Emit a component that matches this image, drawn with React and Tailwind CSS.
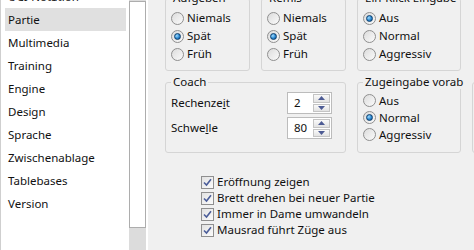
import React from 'react';

const pages = [
  'UCI-Notation',
  'Partie',
  'Multimedia',
  'Training',
  'Engine',
  'Design',
  'Sprache',
  'Zwischenablage',
  'Tablebases',
  'Version',
];

function Radio({ checked, label }) {
  return (
    <div className="flex items-center h-full">
      <div className="w-[13px] h-[13px] rounded-full border border-[#8f8f8f] bg-linear-to-br from-[#dcdcdc] to-[#fbfbfb] flex items-center justify-center">
        {checked && (
          <div className="w-[7px] h-[7px] rounded-full border border-[#0d3f6e] bg-[radial-gradient(circle_at_35%_35%,#9fdcff,#2a86cf_55%,#0b4b85)]" />
        )}
      </div>
      <span className="ml-[3px]">{label}</span>
    </div>
  );
}

function Check({ label }) {
  return (
    <div className="flex items-center h-[16px]">
      <div className="w-[13px] h-[13px] border border-[#8f8f8f] bg-linear-to-br from-[#e2e2e2] to-[#fbfbfb] flex items-center justify-center shrink-0">
        <svg width="9" height="9" viewBox="0 0 9 9">
          <path d="M1 4.5 L3.5 7 L8 1.2" fill="none" stroke="#4b5d99" strokeWidth="1.6" />
        </svg>
      </div>
      <span className="ml-[3px] whitespace-nowrap">{label}</span>
    </div>
  );
}

function Group({ title, className, children }) {
  return (
    <div className={'relative border border-[#d5d5d5] rounded-[3px] shrink-0 ' + className}>
      <span className="absolute top-[-8px] left-[5px] px-[2px] leading-[14px] bg-[#f0f0f0] whitespace-nowrap">
        {title}
      </span>
      {children}
    </div>
  );
}

function Spin({ value }) {
  return (
    <div className="flex w-[45px] h-[22px] border border-[#bcbcbc] bg-white">
      <div className="flex-1 flex items-center pl-[6px]">{value}</div>
      <div className="flex flex-col w-[19px] p-px gap-px">
        {['up', 'down'].map((d) => (
          <div
            key={d}
            className="flex-1 border border-[#c4c4c4] bg-linear-to-b from-[#fafafa] to-[#e2e2e2] flex items-center justify-center"
          >
            <svg width="7" height="4" viewBox="0 0 7 4">
              <path d={d === 'up' ? 'M0 4 L3.5 0 L7 4 Z' : 'M0 0 L7 0 L3.5 4 Z'} fill="#4d5b94" />
            </svg>
          </div>
        ))}
      </div>
    </div>
  );
}

export default function App() {
  return (
    <div
      className="flex w-[474px] h-[250px] overflow-hidden bg-[#f0f0f0] text-[#111] text-[11.5px] leading-[14px]"
      style={{ fontFamily: '"Segoe UI", "Noto Sans", sans-serif' }}
    >
      {/* page list */}
      <div className="w-[129px] h-full bg-white border-l border-[#cfcfcf] overflow-hidden shrink-0">
        <div className="-mt-[15px] pl-[4px]">
          {pages.map((p) => (
            <div
              key={p}
              className={
                'w-[121px] h-[23px] flex items-center pl-[3px] ' + (p === 'Partie' ? 'bg-[#e0e0e0]' : '')
              }
            >
              {p}
            </div>
          ))}
        </div>
      </div>

      {/* scrollbar */}
      <div className="w-[17px] h-full bg-[#dcdcdc] flex flex-col shrink-0 pt-px">
        <div className="h-[227px] border border-[#adadad] bg-white" />
      </div>
      <div className="w-[2px] h-full bg-white shrink-0" />

      {/* settings panel */}
      <div className="flex-1 h-full pl-[17px] overflow-hidden">
        <div className="flex gap-[11px] -mt-[2px]">
          <Group title="Aufgeben" className="w-[85px] h-[73px]">
            <div className="pt-[10px] pl-[5px]">
              <div className="h-[18px]"><Radio label="Niemals" /></div>
              <div className="h-[18px]"><Radio label="Spät" checked /></div>
              <div className="h-[18px]"><Radio label="Früh" /></div>
            </div>
          </Group>
          <Group title="Remis" className="w-[85px] h-[73px]">
            <div className="pt-[10px] pl-[5px]">
              <div className="h-[18px]"><Radio label="Niemals" /></div>
              <div className="h-[18px]"><Radio label="Spät" checked /></div>
              <div className="h-[18px]"><Radio label="Früh" /></div>
            </div>
          </Group>
          <Group title="Ein-Klick Eingabe" className="w-[104px] h-[73px]">
            <div className="pt-[10px] pl-[5px]">
              <div className="h-[18px]"><Radio label="Aus" checked /></div>
              <div className="h-[18px]"><Radio label="Normal" /></div>
              <div className="h-[18px]"><Radio label="Aggressiv" /></div>
            </div>
          </Group>
        </div>

        <div className="flex gap-[11px] mt-[11px]">
          <Group title="Coach" className="w-[181px] h-[71px]">
            <div className="pt-[9px] pl-[5px] flex flex-col gap-[3px]">
              <div className="flex items-center h-[22px]">
                <span className="w-[116px]">
                  Rechenze<span className="underline">i</span>t
                </span>
                <Spin value="2" />
              </div>
              <div className="flex items-center h-[22px]">
                <span className="w-[116px]">
                  Schwe<span className="underline">l</span>le
                </span>
                <Spin value="80" />
              </div>
            </div>
          </Group>
          <Group title="Zugeingabe vorab" className="w-[104px] h-[71px]">
            <div className="pt-[9px] pl-[5px]">
              <div className="h-[17px]"><Radio label="Aus" /></div>
              <div className="h-[17px]"><Radio label="Normal" checked /></div>
              <div className="h-[17px]"><Radio label="Aggressiv" /></div>
            </div>
          </Group>
          <Group title="" className="w-[104px] h-[71px]" />
        </div>

        <div className="mt-[21px] ml-[36px]">
          <Check label="Eröffnung zeigen" />
          <Check label="Brett drehen bei neuer Partie" />
          <Check label="Immer in Dame umwandeln" />
          <Check label="Mausrad führt Züge aus" />
        </div>
      </div>
    </div>
  );
}
